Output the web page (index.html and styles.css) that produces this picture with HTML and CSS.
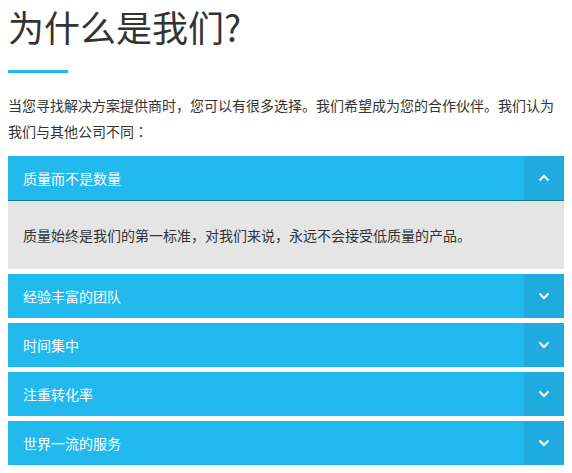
FILE: index.html
```html
<!DOCTYPE html>
<html lang="zh-CN">
<head>
<meta charset="utf-8">
<title>为什么是我们?</title>
<link rel="stylesheet" href="styles.css">
</head>
<body>
<h1 class="title">为什么是我们?</h1>
<div class="rule"></div>
<p class="intro">当您寻找解决方案提供商时，您可以有很多选择。我们希望成为您的合作伙伴。我们认为我们与其他公司不同<span class="colon" lang="zh-TW">：</span></p>
<div class="accordion">
  <div class="item open">
    <div class="head"><span class="label">质量而不是数量</span><span class="toggle"><svg width="12" height="8" viewBox="0 0 12 8"><polyline points="1.5,6.5 6,2 10.5,6.5" fill="none" stroke="#fff" stroke-width="2"/></svg></span></div>
    <div class="body">质量始终是我们的第一标准，对我们来说，永远不会接受低质量的产品。</div>
  </div>
  <div class="item">
    <div class="head"><span class="label">经验丰富的团队</span><span class="toggle"><svg width="12" height="8" viewBox="0 0 12 8"><polyline points="1.5,1.5 6,6 10.5,1.5" fill="none" stroke="#fff" stroke-width="2"/></svg></span></div>
  </div>
  <div class="item">
    <div class="head"><span class="label">时间集中</span><span class="toggle"><svg width="12" height="8" viewBox="0 0 12 8"><polyline points="1.5,1.5 6,6 10.5,1.5" fill="none" stroke="#fff" stroke-width="2"/></svg></span></div>
  </div>
  <div class="item">
    <div class="head"><span class="label">注重转化率</span><span class="toggle"><svg width="12" height="8" viewBox="0 0 12 8"><polyline points="1.5,1.5 6,6 10.5,1.5" fill="none" stroke="#fff" stroke-width="2"/></svg></span></div>
  </div>
  <div class="item">
    <div class="head"><span class="label">世界一流的服务</span><span class="toggle"><svg width="12" height="8" viewBox="0 0 12 8"><polyline points="1.5,1.5 6,6 10.5,1.5" fill="none" stroke="#fff" stroke-width="2"/></svg></span></div>
  </div>
</div>
</body>
</html>
```
FILE: styles.css
```css
html, body {
  background: #fff;
}
body {
  margin: 8px;
  font-family: "Noto Sans CJK SC", "Noto Sans", sans-serif;
  font-size: 14px;
  color: #333;
}
.title {
  margin: 0;
  font-size: 36px;
  font-weight: 400;
  line-height: 36px;
  color: #333;
}
.rule {
  width: 60px;
  height: 3px;
  background: #22b8ec;
  margin-top: 26px;
}
.intro {
  margin: 19px 0 12px;
  line-height: 26px;
}
.colon {
  font-family: "Noto Sans CJK TC", sans-serif;
}
.accordion {
  display: flex;
  flex-direction: column;
  gap: 5px;
}
.head {
  display: flex;
  height: 44px;
  background: #22b9ee;
  color: #fff;
  align-items: stretch;
}
.label {
  flex: 1;
  display: flex;
  align-items: center;
  padding-left: 15px;
}
.toggle {
  width: 40px;
  background: #20abdf;
  display: flex;
  align-items: center;
  justify-content: center;
}
.toggle svg {
  display: block;
}
.open .head {
  border-bottom: 1px solid #0a7f95;
}
.body {
  background: #e5e5e5;
  padding: 0 15px;
  height: 68px;
  display: flex;
  align-items: center;
  color: #333;
}
```
